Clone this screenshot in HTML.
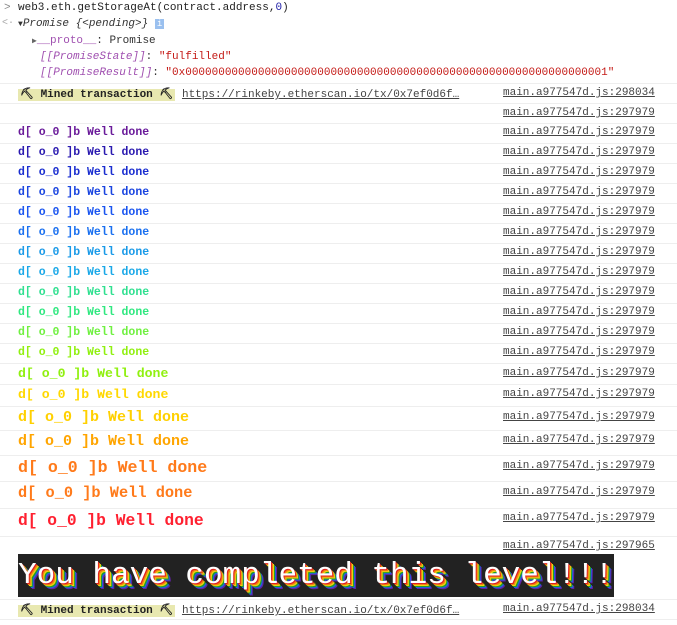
<!DOCTYPE html>
<html><head><meta charset="utf-8"><style>
html,body{margin:0;padding:0;background:#fff;width:677px;height:625px;overflow:hidden;position:relative}
div{position:absolute;white-space:pre;font-family:"Liberation Mono",monospace;font-size:11px}
.ln{left:0;width:677px;height:1px;background:#eee}
.src{left:503px;color:#444;text-decoration:underline}
.w{left:18px;font-weight:bold}
.mined{background:#e8e8b0;color:#222;font-weight:bold;padding:0 2px}
</style></head><body>
<div style="left:4px;top:2px;color:#888">&gt;</div>
<div style="left:18px;top:2px;color:#222">web3.eth.getStorageAt(contract.address,<span style="color:#1a1aa6">0</span>)</div>
<div style="left:2px;top:18px;color:#aaa;font-size:10px">&lt;·</div>
<div style="left:18px;top:18px;color:#333"><span style="font-size:8px">▼</span><i>Promise {&lt;pending&gt;}</i> <span style="background:#9ac0ef;color:#fff;font-size:9px;padding:0 2px">i</span></div>
<div style="left:32px;top:35px;color:#333"><span style="font-size:8px;color:#666">▶</span><span style="color:#a050b0">__proto__</span>: Promise</div>
<div style="left:40px;top:51px;color:#a050b0"><i>[[PromiseState]]</i><span style="color:#333">: </span><span style="color:#c41a16">"fulfilled"</span></div>
<div style="left:40px;top:67px;color:#a050b0"><i>[[PromiseResult]]</i><span style="color:#333">: </span><span style="color:#c41a16">"0x0000000000000000000000000000000000000000000000000000000000000001"</span></div>
<div class="ln" style="top:83px"></div>
<div style="left:18px;top:87px"><span class="mined">⛏ Mined transaction ⛏</span> <span style="color:#444;text-decoration:underline">https://rinkeby.etherscan.io/tx/0x7ef0d6f…</span></div>
<div class="src" style="top:87px">main.a977547d.js:298034</div>
<div class="ln" style="top:103px"></div>
<div class="src" style="top:107px">main.a977547d.js:297979</div>
<div class="ln" style="top:123px"></div>

<div class="w" style="top:126px;color:#6a1b9a;font-size:11.5px">d[ o_0 ]b Well done</div><div class="src" style="top:126px">main.a977547d.js:297979</div><div class="ln" style="top:143px"></div>
<div class="w" style="top:146px;color:#2a1ab0;font-size:11.5px">d[ o_0 ]b Well done</div><div class="src" style="top:146px">main.a977547d.js:297979</div><div class="ln" style="top:163px"></div>
<div class="w" style="top:166px;color:#1a2ed0;font-size:11.5px">d[ o_0 ]b Well done</div><div class="src" style="top:166px">main.a977547d.js:297979</div><div class="ln" style="top:183px"></div>
<div class="w" style="top:186px;color:#1a45e0;font-size:11.5px">d[ o_0 ]b Well done</div><div class="src" style="top:186px">main.a977547d.js:297979</div><div class="ln" style="top:203px"></div>
<div class="w" style="top:206px;color:#1a55f0;font-size:11.5px">d[ o_0 ]b Well done</div><div class="src" style="top:206px">main.a977547d.js:297979</div><div class="ln" style="top:223px"></div>
<div class="w" style="top:226px;color:#1a70f0;font-size:11.5px">d[ o_0 ]b Well done</div><div class="src" style="top:226px">main.a977547d.js:297979</div><div class="ln" style="top:243px"></div>
<div class="w" style="top:246px;color:#1a9ae8;font-size:11.5px">d[ o_0 ]b Well done</div><div class="src" style="top:246px">main.a977547d.js:297979</div><div class="ln" style="top:263px"></div>
<div class="w" style="top:266px;color:#1aa8e8;font-size:11.5px">d[ o_0 ]b Well done</div><div class="src" style="top:266px">main.a977547d.js:297979</div><div class="ln" style="top:283px"></div>
<div class="w" style="top:286px;color:#30e090;font-size:11.5px">d[ o_0 ]b Well done</div><div class="src" style="top:286px">main.a977547d.js:297979</div><div class="ln" style="top:303px"></div>
<div class="w" style="top:306px;color:#30e880;font-size:11.5px">d[ o_0 ]b Well done</div><div class="src" style="top:306px">main.a977547d.js:297979</div><div class="ln" style="top:323px"></div>
<div class="w" style="top:326px;color:#70f040;font-size:11.5px">d[ o_0 ]b Well done</div><div class="src" style="top:326px">main.a977547d.js:297979</div><div class="ln" style="top:343px"></div>
<div class="w" style="top:346px;color:#90f010;font-size:11.5px">d[ o_0 ]b Well done</div><div class="src" style="top:346px">main.a977547d.js:297979</div><div class="ln" style="top:363px"></div>
<div class="w" style="top:366px;color:#90f010;font-size:13.2px">d[ o_0 ]b Well done</div><div class="src" style="top:367px">main.a977547d.js:297979</div><div class="ln" style="top:384px"></div>
<div class="w" style="top:387px;color:#ffd800;font-size:13.2px">d[ o_0 ]b Well done</div><div class="src" style="top:388px">main.a977547d.js:297979</div><div class="ln" style="top:406px"></div>
<div class="w" style="top:409px;color:#ffd000;font-size:15px">d[ o_0 ]b Well done</div><div class="src" style="top:411px">main.a977547d.js:297979</div><div class="ln" style="top:430px"></div>
<div class="w" style="top:433px;color:#ffa500;font-size:15px">d[ o_0 ]b Well done</div><div class="src" style="top:434px">main.a977547d.js:297979</div><div class="ln" style="top:455px"></div>
<div class="w" style="top:458px;color:#ff7a1a;font-size:16.6px">d[ o_0 ]b Well done</div><div class="src" style="top:460px">main.a977547d.js:297979</div><div class="ln" style="top:481px"></div>
<div class="w" style="top:484px;color:#ff7a1a;font-size:15.3px">d[ o_0 ]b Well done</div><div class="src" style="top:486px">main.a977547d.js:297979</div><div class="ln" style="top:508px"></div>
<div class="w" style="top:511px;color:#ff2030;font-size:16.3px">d[ o_0 ]b Well done</div><div class="src" style="top:512px">main.a977547d.js:297979</div><div class="ln" style="top:536px"></div>
<div class="src" style="top:540px">main.a977547d.js:297965</div>
<div style="left:18px;top:554px;width:596px;height:43px;background:#222;overflow:hidden"></div>
<div style="left:18px;top:554px;width:596px;height:43px;overflow:hidden;font-family:'Liberation Mono',monospace;font-size:31px;line-height:43px;color:#fff;text-shadow:1px 1px 0 #e02020,2px 2px 0 #f08010,3px 3px 0 #f0d010,4px 4px 0 #20a020,5px 5px 0 #2060e0,6px 6px 0 #6020a0">You have completed this level!!!</div>
<div class="ln" style="top:599px"></div>
<div style="left:18px;top:603px"><span class="mined">⛏ Mined transaction ⛏</span> <span style="color:#444;text-decoration:underline">https://rinkeby.etherscan.io/tx/0x7ef0d6f…</span></div>
<div class="src" style="top:603px">main.a977547d.js:298034</div>
<div class="ln" style="top:619px"></div>
</body></html>
